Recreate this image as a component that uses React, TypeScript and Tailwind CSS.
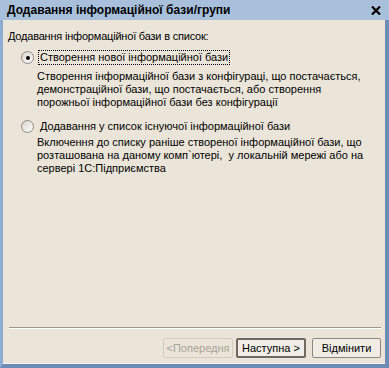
import React from "react";

const Radio = ({ checked }: { checked?: boolean }) => (
  <span className="relative inline-block w-[13px] h-[13px] rounded-full border border-[#8d8a82] bg-gradient-to-br from-[#d8d4cc] to-white shrink-0">
    {checked && <span className="absolute left-[3.5px] top-[3.5px] w-[4px] h-[4px] rounded-full bg-black" />}
  </span>
);

const App = () => {
  return (
    <div className="w-[389px] h-[368px] flex flex-col bg-[#a8bfdc] text-[11px] text-black font-['Liberation_Sans',Arial,sans-serif] leading-[13px]">
      <div className="h-[20px] flex items-center justify-between pl-[7px] pr-[8px] bg-[#a9c0dd]">
        <span className="font-bold text-[12px]">Додавання інформаційної бази/групи</span>
        <svg width="10" height="9" viewBox="0 0 10 9">
          <path d="M1 0.5 L9 8.5 M9 0.5 L1 8.5" stroke="#000" strokeWidth="2.2" />
        </svg>
      </div>
      <div className="flex-1 flex flex-col border-l-[3px] border-l-[#8fadd3] border-r-[4px] border-r-[#6c8bb5] border-b-[4px] border-b-[#6c8bb5]">
        <div className="flex-1 flex flex-col bg-[#ebe5d9] border-b border-b-[#f8f6f2]">
          <div className="pl-[5px] pt-[10px] tracking-[-0.2px]">Додавання інформаційної бази в список:</div>

          <div className="flex items-center gap-[4px] pl-[18px] mt-[7px]">
            <Radio checked />
            <span className="border border-dotted border-black px-[1px] leading-[13px]">Створення нової інформаційної бази</span>
          </div>
          <div className="pl-[34px] pr-[20px] mt-[5px]">
            Створення інформаційної бази з конфігураці, що постачається, демонстраційної бази, що постачається, або створення порожньої інформаційної бази без конфігурації
          </div>

          <div className="flex items-center gap-[4px] pl-[18px] mt-[10px]">
            <Radio />
            <span className="border border-transparent px-[1px]">Додавання у список існуючої інформаційної бази</span>
          </div>
          <div className="pl-[34px] pr-[20px] mt-[2px]">
            Включення до списку раніше створеної інформаційної бази, що розташована на даному комп`ютері,&nbsp; у локальній мережі або на сервері 1С:Підприємства
          </div>

          <div className="flex-1" />
          <div className="ml-[6px] mr-[4px] border-t border-t-[#9d9689] border-b border-b-white" />
          <div className="flex justify-end items-center pr-[4px] pt-[9px] pb-[5px]">
            <button className="w-[70px] h-[20px] border border-[#d2ccc0] bg-[#ebe5d9] text-[#a7a297] rounded-[2px]">&lt;Попередня</button>
            <button className="w-[70px] h-[20px] ml-[3px] border-2 border-[#6f6a61] bg-[#f1ede6] rounded-[2px]">Наступна &gt;</button>
            <button className="w-[69px] h-[20px] ml-[6px] border border-[#8b877f] bg-[#f1ede6] rounded-[2px]">Відмінити</button>
          </div>
        </div>
      </div>
    </div>
  );
};

export default App;
